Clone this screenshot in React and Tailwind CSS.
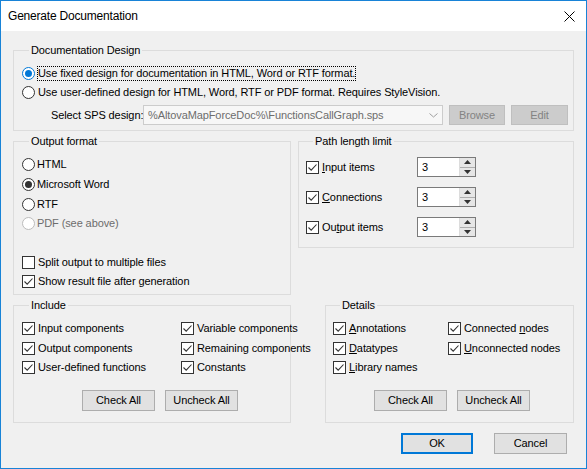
import { useState } from "react";

function Radio({ checked, focused, disabled }) {
  const ring = disabled
    ? "border-[#bcbcbc]"
    : focused
    ? "border-[#0078d7]"
    : "border-[#333333]";
  const dot = focused ? "bg-[#0078d7]" : "bg-[#333333]";
  return (
    <span
      className={`w-[13px] h-[13px] rounded-full border bg-white flex items-center justify-center shrink-0 ${ring}`}
    >
      {checked && <span className={`w-[7px] h-[7px] rounded-full ${dot}`} />}
    </span>
  );
}

function Check({ checked }) {
  return (
    <span className="w-[13px] h-[13px] border border-[#333333] bg-white flex items-center justify-center shrink-0">
      {checked && (
        <svg width="11" height="11" viewBox="0 0 11 11">
          <path d="M1.5 5.5 L4.2 8.2 L9.5 2.5" fill="none" stroke="#333333" strokeWidth="1.1" />
        </svg>
      )}
    </span>
  );
}

function Btn({ children, className = "", primary, disabled }) {
  const look = disabled
    ? "bg-[#cccccc] border border-[#bfbfbf] text-[#838383]"
    : primary
    ? "bg-[#e1e1e1] border-2 border-[#0078d7]"
    : "bg-[#e1e1e1] border border-[#adadad]";
  return (
    <div className={`flex items-center justify-center ${look} ${className}`}>
      {children}
    </div>
  );
}

function Group({ title, className = "", children }) {
  return (
    <fieldset className={`border border-[#dcdcdc] min-w-0 shrink-0 ${className}`}>
      <legend className="ml-[7px] px-[2px] leading-[15px]">{title}</legend>
      {children}
    </fieldset>
  );
}

function CheckRow({ checked = true, children, className = "" }) {
  return (
    <div className={`flex items-center gap-[3px] whitespace-nowrap ${className}`}>
      <Check checked={checked} />
      <span>{children}</span>
    </div>
  );
}

function Spinner({ value }) {
  return (
    <div className="w-[59px] h-[20px] border border-[#7a7a7a] bg-white flex">
      <div className="flex-1 pl-[4px] flex items-center">{value}</div>
      <div className="w-[16px] flex flex-col border-l border-[#dcdcdc]">
        <div className="flex-1 bg-[#e6e6e6] border-b border-[#adadad] flex items-center justify-center">
          <svg width="7" height="4" viewBox="0 0 7 4"><path d="M0 4 L3.5 0 L7 4 Z" fill="#333" /></svg>
        </div>
        <div className="flex-1 bg-[#e6e6e6] flex items-center justify-center">
          <svg width="7" height="4" viewBox="0 0 7 4"><path d="M0 0 L3.5 4 L7 0 Z" fill="#333" /></svg>
        </div>
      </div>
    </div>
  );
}

export default function App() {
  const [format] = useState("word");
  const limits = [
    { label: "Input items", key: 0 },
    { label: "Connections", key: 1 },
    { label: "Output items", key: 2 },
  ];

  return (
    <div
      className="w-[587px] h-[469px] border border-[#1883d7] bg-[#f0f0f0] flex flex-col text-[11px] tracking-[-0.1px] text-black overflow-hidden"
      style={{ fontFamily: '"Liberation Sans", Arial, sans-serif' }}
    >
      {/* title bar */}
      <div className="h-[30px] bg-white flex items-center justify-between pl-[7px] pr-[11px] shrink-0">
        <span className="text-[12px] tracking-[-0.2px]">Generate Documentation</span>
        <svg width="11" height="11" viewBox="0 0 11 11">
          <path d="M0.5 0.5 L10.5 10.5 M10.5 0.5 L0.5 10.5" stroke="#000" strokeWidth="1" />
        </svg>
      </div>

      <div className="flex flex-col pl-[12px] pr-[12px] pt-[12px]">
        {/* Documentation Design */}
        <Group title="Documentation Design" className="h-[88px] pl-[8px] pr-[5px]">
          <div className="pt-[6px]">
            <div className="h-[19px] flex items-center gap-[3px] whitespace-nowrap">
              <Radio checked focused />
              <span className="outline outline-1 outline-dotted outline-black leading-[13px]">
                Use fixed design for documentation in HTML, Word or RTF format.
              </span>
            </div>
            <div className="h-[19px] flex items-center gap-[3px] whitespace-nowrap">
              <Radio />
              <span>Use user-defined design for HTML, Word, RTF or PDF format. Requires StyleVision.</span>
            </div>
            <div className="h-[20px] mt-[3px] flex items-center whitespace-nowrap">
              <span className="ml-[29px] w-[92px]">Select SPS design:</span>
              <div className="w-[300px] h-[20px] border border-[#cccccc] bg-[#f7f7f7] flex items-center text-[#6d6d6d]">
                <span className="flex-1 pl-[4px]">%AltovaMapForceDoc%\FunctionsCallGraph.sps</span>
                <svg width="17" height="18" viewBox="0 0 17 18">
                  <path d="M4.5 7.5 L8.5 11 L12.5 7.5" fill="none" stroke="#a0a0a0" strokeWidth="1" />
                </svg>
              </div>
              <Btn disabled className="w-[56px] h-[20px] ml-[6px]">Browse</Btn>
              <Btn disabled className="w-[57px] h-[20px] ml-[6px]">Edit</Btn>
            </div>
          </div>
        </Group>

        <div className="flex mt-[3px] items-start">
          {/* Output format */}
          <Group title="Output format" className="w-[278px] h-[161px] pl-[8px]">
            <div className="pt-[5px]">
              <div className="h-[20px] flex items-center gap-[2px]">
                <Radio checked={format === "html"} />
                <span>HTML</span>
              </div>
              <div className="h-[20px] flex items-center gap-[2px]">
                <Radio checked={format === "word"} />
                <span>Microsoft Word</span>
              </div>
              <div className="h-[20px] flex items-center gap-[2px]">
                <Radio checked={format === "rtf"} />
                <span>RTF</span>
              </div>
              <div className="h-[19px] flex items-center gap-[2px] text-[#6d6d6d]">
                <Radio disabled />
                <span>PDF (see above)</span>
              </div>
              <CheckRow checked={false} className="h-[19px] mt-[20px]">Split output to multiple files</CheckRow>
              <CheckRow className="h-[19px]">Show result file after generation</CheckRow>
            </div>
          </Group>

          {/* Path length limit */}
          <Group title="Path length limit" className="w-[276px] h-[114px] ml-[7px] pl-[7px]">
            <div className="pt-[8px] flex flex-col gap-[10px]">
              {limits.map((l) => (
                <div key={l.key} className="h-[20px] flex items-center">
                  <div className="w-[111px] flex items-center gap-[3px]">
                    <Check checked />
                    <span>
                      {l.key === 0 && (<><u>I</u>nput items</>)}
                      {l.key === 1 && (<><u>C</u>onnections</>)}
                      {l.key === 2 && (<>Ou<u>t</u>put items</>)}
                    </span>
                  </div>
                  <Spinner value="3" />
                </div>
              ))}
            </div>
          </Group>
        </div>

        <div className="flex mt-[3px] items-start">
          {/* Include */}
          <Group title="Include" className="w-[278px] h-[125px] pl-[8px]">
            <div className="pt-[5px] grid grid-cols-[159px_1fr]">
              <CheckRow className="h-[20px]">Input components</CheckRow>
              <CheckRow className="h-[20px]">Variable components</CheckRow>
              <CheckRow className="h-[20px]">Output components</CheckRow>
              <CheckRow className="h-[20px]">Remaining components</CheckRow>
              <CheckRow className="h-[19px]">User-defined functions</CheckRow>
              <CheckRow className="h-[19px]">Constants</CheckRow>
            </div>
            <div className="flex gap-[10px] mt-[13px] ml-[60px]">
              <Btn className="w-[73px] h-[21px]">Check All</Btn>
              <Btn className="w-[73px] h-[21px]">Uncheck All</Btn>
            </div>
          </Group>

          {/* Details */}
          <Group title="Details" className="w-[249px] h-[125px] ml-[34px] pl-[7px]">
            <div className="pt-[5px] grid grid-cols-[115px_1fr]">
              <CheckRow className="h-[20px]"><u>A</u>nnotations</CheckRow>
              <CheckRow className="h-[20px]">Connected <u>n</u>odes</CheckRow>
              <CheckRow className="h-[20px]"><u>D</u>atatypes</CheckRow>
              <CheckRow className="h-[20px]"><u>U</u>nconnected nodes</CheckRow>
              <CheckRow className="h-[19px]"><u>L</u>ibrary names</CheckRow>
            </div>
            <div className="flex gap-[10px] mt-[13px] ml-[41px]">
              <Btn className="w-[73px] h-[21px]">Check All</Btn>
              <Btn className="w-[73px] h-[21px]">Uncheck All</Btn>
            </div>
          </Group>
        </div>

        {/* footer */}
        <div className="flex justify-end gap-[21px] mt-[10px] pr-[7px]">
          <Btn primary className="w-[72px] h-[21px]">OK</Btn>
          <Btn className="w-[73px] h-[21px]">Cancel</Btn>
        </div>
      </div>
    </div>
  );
}
